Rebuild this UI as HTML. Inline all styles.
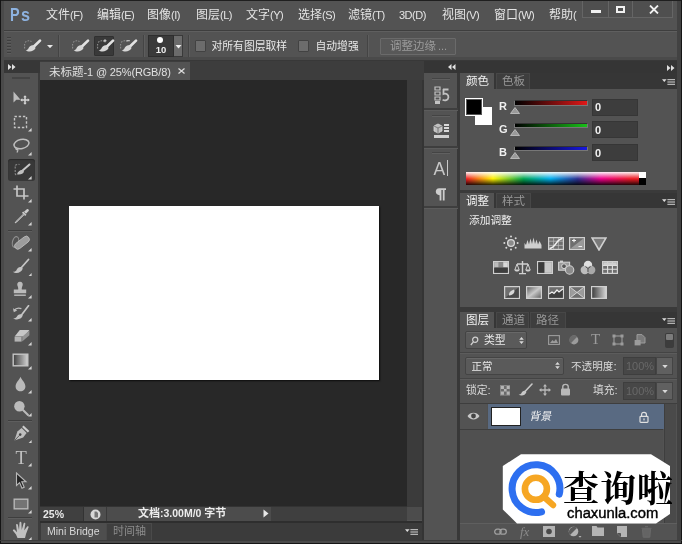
<!DOCTYPE html>
<html lang="zh"><head><meta charset="utf-8"><title>Photoshop</title>
<style>
html,body{margin:0;padding:0;}
body{width:682px;height:544px;overflow:hidden;position:relative;background:#535353;font-family:"Liberation Sans","Noto Sans CJK SC",sans-serif;}
div,svg.a{position:absolute;}
.l{white-space:nowrap;}
.cjt{display:inline-block;vertical-align:top;letter-spacing:0;white-space:nowrap;font-family:"Liberation Sans","Noto Sans CJK SC",sans-serif;}
</style></head><body><div id="root" style="left:0;top:0;width:682px;height:544px;will-change:transform;overflow:hidden;">
<div style="left:0px;top:0px;width:682px;height:544px;background:#535353;"></div>
<div style="left:0px;top:0px;width:682px;height:1px;background:#1f1f1f;"></div>
<div style="left:0px;top:30px;width:682px;height:1px;background:#3e3e3e;"></div>
<div class="l" style="left:46px;top:9px;font-size:11px;letter-spacing:-0.5px;line-height:13.92px;height:13.92px;color:#e4e4e4;"><span class="cjt" style="width:24px;font-size:12px;">文件</span>(F)</div>
<div class="l" style="left:97px;top:9px;font-size:11px;letter-spacing:-0.5px;line-height:13.92px;height:13.92px;color:#e4e4e4;"><span class="cjt" style="width:24px;font-size:12px;">编辑</span>(E)</div>
<div class="l" style="left:147px;top:9px;font-size:11px;letter-spacing:-0.5px;line-height:13.92px;height:13.92px;color:#e4e4e4;"><span class="cjt" style="width:24px;font-size:12px;">图像</span>(I)</div>
<div class="l" style="left:196px;top:9px;font-size:11px;letter-spacing:-0.5px;line-height:13.92px;height:13.92px;color:#e4e4e4;"><span class="cjt" style="width:24px;font-size:12px;">图层</span>(L)</div>
<div class="l" style="left:246px;top:9px;font-size:11px;letter-spacing:-0.5px;line-height:13.92px;height:13.92px;color:#e4e4e4;"><span class="cjt" style="width:24px;font-size:12px;">文字</span>(Y)</div>
<div class="l" style="left:298px;top:9px;font-size:11px;letter-spacing:-0.5px;line-height:13.92px;height:13.92px;color:#e4e4e4;"><span class="cjt" style="width:24px;font-size:12px;">选择</span>(S)</div>
<div class="l" style="left:348px;top:9px;font-size:11px;letter-spacing:-0.5px;line-height:13.92px;height:13.92px;color:#e4e4e4;"><span class="cjt" style="width:24px;font-size:12px;">滤镜</span>(T)</div>
<div class="l" style="left:399px;top:9px;font-size:11px;letter-spacing:-0.5px;line-height:13.92px;height:13.92px;color:#e4e4e4;">3D(D)</div>
<div class="l" style="left:442px;top:9px;font-size:11px;letter-spacing:-0.5px;line-height:13.92px;height:13.92px;color:#e4e4e4;"><span class="cjt" style="width:24px;font-size:12px;">视图</span>(V)</div>
<div class="l" style="left:494px;top:9px;font-size:11px;letter-spacing:-0.5px;line-height:13.92px;height:13.92px;color:#e4e4e4;"><span class="cjt" style="width:24px;font-size:12px;">窗口</span>(W)</div>
<div class="l" style="left:549px;top:9px;font-size:11px;letter-spacing:-0.5px;line-height:13.92px;height:13.92px;color:#e4e4e4;"><span class="cjt" style="width:24px;font-size:12px;">帮助</span>(</div>
<div class="l" style="left:10.4px;top:5.2px;font-size:18px;line-height:20px;font-weight:bold;color:#8db2e0;"><span style="display:inline-block;transform-origin:0 0;transform:scaleX(0.8);">P</span><span style="display:inline-block;margin-left:-1.1px;transform-origin:0 0;transform:scaleX(0.9);">s</span></div>
<div style="left:582px;top:1px;width:27px;height:17px;background:#4f4f4f;border:1px solid #656565;border-top:none;box-sizing:border-box;"></div>
<div style="left:608px;top:1px;width:25px;height:17px;background:#4f4f4f;border:1px solid #656565;border-top:none;box-sizing:border-box;"></div>
<div style="left:632px;top:1px;width:41px;height:17px;background:#4f4f4f;border:1px solid #656565;border-top:none;box-sizing:border-box;"></div>
<div style="left:591px;top:10px;width:10px;height:3px;background:#f0f0f0;"></div>
<div style="left:616px;top:6px;width:9px;height:7px;border:2px solid #f0f0f0;border-top-width:2px;box-sizing:border-box;"></div>
<svg class="a" style="left:649px;top:5px" width="10" height="9" viewBox="0 0 10 9"><path d="M1 0.5L9 8.5M9 0.5L1 8.5" stroke="#f0f0f0" stroke-width="1.8"/></svg>
<div style="left:4px;top:31px;width:673px;height:1px;background:#5f5f5f;"></div>
<div style="left:0px;top:57px;width:682px;height:4px;background:#4a4a4a;"></div>
<div style="left:0px;top:60px;width:682px;height:1px;background:#383838;"></div>
<div style="left:7px;top:37px;width:4px;height:18px;background:repeating-linear-gradient(#3f3f3f 0 1px,#5c5c5c 1px 2px,transparent 2px 3px);"></div>
<div style="left:58px;top:35px;width:1px;height:22px;background:#444;"></div>
<div style="left:59px;top:35px;width:1px;height:22px;background:#5d5d5d;"></div>
<div style="left:143px;top:35px;width:1px;height:22px;background:#444;"></div>
<div style="left:144px;top:35px;width:1px;height:22px;background:#5d5d5d;"></div>
<div style="left:188px;top:35px;width:1px;height:22px;background:#444;"></div>
<div style="left:189px;top:35px;width:1px;height:22px;background:#5d5d5d;"></div>
<div style="left:366.5px;top:35px;width:1px;height:22px;background:#444;"></div>
<div style="left:367.5px;top:35px;width:1px;height:22px;background:#5d5d5d;"></div>
<svg class="a" style="left:23px;top:38px" width="19" height="16" viewBox="0 0 19 16"><path d="M2.2 4.5C3.5 2.6 6.5 2.2 8.4 3.6M1.6 6V11.5" fill="none" stroke="#8e8e8e" stroke-width="1.1" stroke-dasharray="1.6 1.2"/><path d="M17 2.6L10.4 9" stroke="#e2e2e2" stroke-width="2.7" stroke-linecap="round"/><path d="M11 7.6C8.6 6.6 6.2 8.4 5.4 10.4C4.8 11.6 3.8 12.2 2.6 12.2C5.2 14.4 11 13.8 12.6 10Z" fill="#d6d6d6"/></svg>
<svg class="a" style="left:47px;top:45px" width="6" height="3.2" viewBox="0 0 6 3.2"><path d="M0 0H6L3 3.2Z" fill="#e8e8e8"/></svg>
<svg class="a" style="left:71px;top:38px" width="19" height="16" viewBox="0 0 19 16"><path d="M2.2 4.5C3.5 2.6 6.5 2.2 8.4 3.6M1.6 6V11.5" fill="none" stroke="#8e8e8e" stroke-width="1.1" stroke-dasharray="1.6 1.2"/><path d="M17 2.6L10.4 9" stroke="#e2e2e2" stroke-width="2.7" stroke-linecap="round"/><path d="M11 7.6C8.6 6.6 6.2 8.4 5.4 10.4C4.8 11.6 3.8 12.2 2.6 12.2C5.2 14.4 11 13.8 12.6 10Z" fill="#d6d6d6"/></svg>
<div style="left:94px;top:36px;width:20px;height:20px;background:#393939;border:1px solid #303030;box-sizing:border-box;border-radius:1px;"></div>
<svg class="a" style="left:96px;top:38px" width="19" height="16" viewBox="0 0 19 16"><path d="M2.2 4.5C3.5 2.6 6.5 2.2 8.4 3.6M1.6 6V11.5" fill="none" stroke="#8e8e8e" stroke-width="1.1" stroke-dasharray="1.6 1.2"/><path d="M9 1.2V4.2M7.5 2.7H10.5" stroke="#d0d0d0" stroke-width="1.1"/><path d="M17 2.6L10.4 9" stroke="#e2e2e2" stroke-width="2.7" stroke-linecap="round"/><path d="M11 7.6C8.6 6.6 6.2 8.4 5.4 10.4C4.8 11.6 3.8 12.2 2.6 12.2C5.2 14.4 11 13.8 12.6 10Z" fill="#d6d6d6"/></svg>
<svg class="a" style="left:119px;top:38px" width="19" height="16" viewBox="0 0 19 16"><path d="M2.2 4.5C3.5 2.6 6.5 2.2 8.4 3.6M1.6 6V11.5" fill="none" stroke="#8e8e8e" stroke-width="1.1" stroke-dasharray="1.6 1.2"/><path d="M7.5 2.7H10.8" stroke="#d0d0d0" stroke-width="1.1"/><path d="M17 2.6L10.4 9" stroke="#e2e2e2" stroke-width="2.7" stroke-linecap="round"/><path d="M11 7.6C8.6 6.6 6.2 8.4 5.4 10.4C4.8 11.6 3.8 12.2 2.6 12.2C5.2 14.4 11 13.8 12.6 10Z" fill="#d6d6d6"/></svg>
<div style="left:148px;top:35px;width:26px;height:22px;background:#3a3a3a;border:1px solid #2e2e2e;box-sizing:border-box;"></div>
<div style="left:174px;top:35px;width:9px;height:22px;background:#6b6b6b;border:1px solid #3a3a3a;border-left:none;box-sizing:border-box;"></div>
<div style="left:157px;top:37px;width:6px;height:6px;background:#fff;border-radius:3px;"></div>
<div class="l" style="left:148px;top:44px;width:26px;text-align:center;font-size:9.5px;font-weight:bold;line-height:12px;color:#f0f0f0;">10</div>
<svg class="a" style="left:175px;top:45px" width="7" height="4" viewBox="0 0 7 4"><path d="M0.5 0H6.5L3.5 3.5Z" fill="#f0f0f0"/></svg>
<div style="left:194.6px;top:40.4px;width:11.5px;height:11.3px;background:#6c6c6c;border:1px solid #424242;box-sizing:border-box;border-radius:1px;"></div>
<div style="left:297.6px;top:40.4px;width:11.5px;height:11.3px;background:#6c6c6c;border:1px solid #424242;box-sizing:border-box;border-radius:1px;"></div>
<div class="l" style="left:211.5px;top:40px;font-size:12px;letter-spacing:0px;line-height:13.92px;height:13.92px;color:#e8e8e8;"><span class="cjt" style="width:75.6px;font-size:10.8px;">对所有图层取样</span></div>
<div class="l" style="left:315.5px;top:40px;font-size:12px;letter-spacing:0px;line-height:13.92px;height:13.92px;color:#e8e8e8;"><span class="cjt" style="width:43.2px;font-size:10.8px;">自动增强</span></div>
<div style="left:380px;top:38px;width:76px;height:17px;background:#585858;border:1px solid #6a6a6a;box-sizing:border-box;border-radius:1px;"></div>
<div class="l" style="left:390px;top:39.8px;font-size:12px;letter-spacing:0px;line-height:13.92px;height:13.92px;color:#9a9a9a;"><span class="cjt" style="width:46px;font-size:11.5px;">调整边缘</span></div>
<div class="l" style="left:438px;top:40px;font-size:11px;line-height:13px;color:#9a9a9a;">...</div>
<div style="left:0px;top:61px;width:682px;height:19px;background:#3d3d3d;"></div>
<div style="left:40px;top:80px;width:384px;height:427px;background:#282828;"></div>
<div style="left:40px;top:62px;width:150px;height:18px;background:#535353;"></div>
<div class="l" style="left:49px;top:65.5px;font-size:11px;letter-spacing:-0.15px;line-height:13.34px;height:13.34px;color:#e0e0e0;"><span class="cjt" style="width:34.5px;font-size:11.5px;">未标题</span>-1 @ 25%(RGB/8)</div>
<svg class="a" style="left:178px;top:68px" width="7" height="6" viewBox="0 0 7 6"><path d="M0.5 0.5L6.5 5.5M6.5 0.5L0.5 5.5" stroke="#ddd" stroke-width="1.2"/></svg>
<div style="left:68.7px;top:206px;width:310.1px;height:174.4px;background:#fff;box-shadow:1px 1px 1.5px rgba(0,0,0,0.7);"></div>
<div style="left:0px;top:61px;width:40px;height:12px;background:#373737;"></div>
<svg class="a" style="left:8px;top:64px" width="8" height="6" viewBox="0 0 8 6"><path d="M0 0L3.5 3L0 6ZM4 0L7.5 3L4 6Z" fill="#e0e0e0"/></svg>
<div style="left:4px;top:73px;width:35px;height:468px;background:#535353;"></div>
<div style="left:38px;top:73px;width:2px;height:468px;background:#3c3c3c;"></div>
<div style="left:12px;top:77px;width:18px;height:2px;background:#444;"></div>
<div style="left:7.5px;top:158.5px;width:27px;height:22px;background:#383838;border-radius:3px;box-shadow:inset 0 1px 1px #2a2a2a;"></div>
<div style="left:8px;top:230px;width:24px;height:1px;background:#3e3e3e;"></div>
<div style="left:8px;top:231px;width:24px;height:1px;background:#5e5e5e;"></div>
<div style="left:8px;top:420px;width:24px;height:1px;background:#3e3e3e;"></div>
<div style="left:8px;top:421px;width:24px;height:1px;background:#5e5e5e;"></div>
<div style="left:8px;top:517px;width:24px;height:1px;background:#3e3e3e;"></div>
<div style="left:8px;top:518px;width:24px;height:1px;background:#5e5e5e;"></div>
<div style="left:0;top:0;opacity:.86;">
<svg class="a" style="left:12px;top:91px" width="20" height="15" viewBox="0 0 20 15"><path d="M1.5 0.5V11.5L4.3 8.7H8.5Z" fill="#cfcfcf"/><path d="M13 5.5V12.5M9.5 9H16.5" stroke="#e8e8e8" stroke-width="1.6"/><path d="M13 4.2L14.8 6.3H11.2ZM13 13.8L14.8 11.7H11.2ZM8.2 9L10.3 7.2V10.8ZM17.8 9L15.7 7.2V10.8Z" fill="#e8e8e8"/></svg>
<svg class="a" style="left:13px;top:115px" width="16" height="15" viewBox="0 0 16 15"><rect x="1.5" y="1.5" width="12" height="11" fill="none" stroke="#d8d8d8" stroke-width="1.4" stroke-dasharray="2.4 1.8"/></svg>
<svg class="a" style="left:28.3px;top:128.3px" width="3.6" height="3.6" viewBox="0 0 3.6 3.6"><path d="M3.6 0V3.6H0Z" fill="#e8e8e8"/></svg>
<svg class="a" style="left:12px;top:137px" width="20" height="17" viewBox="0 0 20 17"><ellipse cx="9.5" cy="7" rx="7.6" ry="4.6" transform="rotate(-12 9.5 7)" fill="none" stroke="#d0d0d0" stroke-width="1.5"/><path d="M4.2 10.5C3.2 12 4.5 13 5.6 12.2C6.2 13.5 5.6 14.8 4.8 15.4" fill="none" stroke="#d0d0d0" stroke-width="1.2"/></svg>
<svg class="a" style="left:28.3px;top:152.3px" width="3.6" height="3.6" viewBox="0 0 3.6 3.6"><path d="M3.6 0V3.6H0Z" fill="#e8e8e8"/></svg>
<svg class="a" style="left:13px;top:162px" width="20" height="16" viewBox="0 0 20 16"><path d="M2.5 3.5C2 3 5 2 6.5 2.5M2.2 4.5V11.5C2.2 12.5 3 13 4 13" fill="none" stroke="#9a9a9a" stroke-width="1.1" stroke-dasharray="2 1.4"/><path d="M16.5 2.5L9 9" stroke="#e0e0e0" stroke-width="2" stroke-linecap="round"/><path d="M9.8 8.2C7.5 7.6 4.8 9.6 4 12.2C7 13 10.6 11.6 11 9.4Z" fill="#d6d6d6"/></svg>
<svg class="a" style="left:28.3px;top:176.3px" width="3.6" height="3.6" viewBox="0 0 3.6 3.6"><path d="M3.6 0V3.6H0Z" fill="#e8e8e8"/></svg>
<svg class="a" style="left:13px;top:185px" width="16" height="16" viewBox="0 0 16 16"><path d="M4 0.5V11H15.5M0.5 4H11V14.5" fill="none" stroke="#d8d8d8" stroke-width="1.7"/></svg>
<svg class="a" style="left:28.3px;top:199.3px" width="3.6" height="3.6" viewBox="0 0 3.6 3.6"><path d="M3.6 0V3.6H0Z" fill="#e8e8e8"/></svg>
<svg class="a" style="left:13px;top:208px" width="17" height="17" viewBox="0 0 17 17"><path d="M13.8 1.2C15 0.4 16.4 1.8 15.7 3L13 5.8L11 3.8Z" fill="#e0e0e0"/><path d="M9.6 4.2L12.8 7.4" stroke="#e0e0e0" stroke-width="1.8"/><path d="M11 5.5L3.5 13L2 15L4 13.7L11.6 6.2Z" fill="#8a8a8a" stroke="#d8d8d8" stroke-width="1"/></svg>
<svg class="a" style="left:28.3px;top:222.3px" width="3.6" height="3.6" viewBox="0 0 3.6 3.6"><path d="M3.6 0V3.6H0Z" fill="#e8e8e8"/></svg>
<svg class="a" style="left:11px;top:234px" width="21" height="18" viewBox="0 0 21 18"><ellipse cx="4.5" cy="8" rx="3" ry="5.5" transform="rotate(15 4.5 8)" fill="none" stroke="#9c9c9c" stroke-width="1.1"/><rect x="2.5" y="5.5" width="17" height="6.4" rx="3.2" transform="rotate(-38 11 8.7)" fill="#a8a8a8" stroke="#d0d0d0" stroke-width="0.8"/></svg>
<svg class="a" style="left:28.3px;top:248.3px" width="3.6" height="3.6" viewBox="0 0 3.6 3.6"><path d="M3.6 0V3.6H0Z" fill="#e8e8e8"/></svg>
<svg class="a" style="left:12px;top:258px" width="19" height="17" viewBox="0 0 19 17"><path d="M16.5 1.5L9 10" stroke="#d8d8d8" stroke-width="1.8" stroke-linecap="round"/><path d="M9.3 9.2C7 8.6 5 10.5 4.3 12.5C3.5 13.6 2 14 0.8 13.8C3.5 16 9.4 15.4 10.8 10.6Z" fill="#d6d6d6"/></svg>
<svg class="a" style="left:28.3px;top:272.8px" width="3.6" height="3.6" viewBox="0 0 3.6 3.6"><path d="M3.6 0V3.6H0Z" fill="#e8e8e8"/></svg>
<svg class="a" style="left:12px;top:281px" width="17" height="18" viewBox="0 0 17 18"><path d="M8 0.8C10.2 0.8 11.2 2.6 10.6 4.4C10 6 9.6 7 9.8 8.4H14.2V12.2H1.8V8.4H6.2C6.4 7 6 6 5.4 4.4C4.8 2.6 5.8 0.8 8 0.8Z" fill="#cdcdcd"/><path d="M2.2 14.2H13.8" stroke="#cdcdcd" stroke-width="1.4"/></svg>
<svg class="a" style="left:28.3px;top:295.3px" width="3.6" height="3.6" viewBox="0 0 3.6 3.6"><path d="M3.6 0V3.6H0Z" fill="#e8e8e8"/></svg>
<svg class="a" style="left:12px;top:305px" width="19" height="17" viewBox="0 0 19 17"><path d="M16.5 0.8L9.5 10" stroke="#d8d8d8" stroke-width="1.7" stroke-linecap="round"/><path d="M9.3 9.4C7.2 8.8 5.4 10.4 4.6 12C3.8 13 2.4 13.4 1.2 13.2C3.8 15.4 9.4 14.8 10.8 10.6Z" fill="#d6d6d6"/><path d="M2 5.6C3.6 3.4 6.6 2.6 9.4 3.6" fill="none" stroke="#cfcfcf" stroke-width="1.3"/><path d="M1 3.2L1.8 7.2L5.2 5.4Z" fill="#cfcfcf"/></svg>
<svg class="a" style="left:28.3px;top:318.3px" width="3.6" height="3.6" viewBox="0 0 3.6 3.6"><path d="M3.6 0V3.6H0Z" fill="#e8e8e8"/></svg>
<svg class="a" style="left:13px;top:329px" width="18" height="15" viewBox="0 0 18 15"><path d="M6.8 1H16.4L11.4 7.4H1.6Z" fill="#dadada"/><path d="M1.6 7.8H8.6V12.6H1.6Z" fill="#c4c4c4"/><path d="M9.2 7.8L16.4 1.6V6.2L9.2 12.6Z" fill="#9e9e9e"/></svg>
<svg class="a" style="left:28.3px;top:342.3px" width="3.6" height="3.6" viewBox="0 0 3.6 3.6"><path d="M3.6 0V3.6H0Z" fill="#e8e8e8"/></svg>
<svg class="a" style="left:12px;top:353px" width="18" height="15" viewBox="0 0 18 15"><defs><linearGradient id="gg" x1="0" x2="1"><stop offset="0" stop-color="#3c3c3c"/><stop offset="1" stop-color="#e8e8e8"/></linearGradient></defs><rect x="1.2" y="1.2" width="14.6" height="11.6" fill="url(#gg)" stroke="#d8d8d8" stroke-width="1.4"/></svg>
<svg class="a" style="left:28.3px;top:366.3px" width="3.6" height="3.6" viewBox="0 0 3.6 3.6"><path d="M3.6 0V3.6H0Z" fill="#e8e8e8"/></svg>
<svg class="a" style="left:14px;top:376px" width="14" height="17" viewBox="0 0 14 17"><path d="M6.5 0.8C7.6 3.8 11.4 6.8 11.4 10.4C11.4 13.4 9.2 15.2 6.5 15.2C3.8 15.2 1.6 13.4 1.6 10.4C1.6 6.8 5.4 3.8 6.5 0.8Z" fill="#cbcbcb"/></svg>
<svg class="a" style="left:28.3px;top:390.3px" width="3.6" height="3.6" viewBox="0 0 3.6 3.6"><path d="M3.6 0V3.6H0Z" fill="#e8e8e8"/></svg>
<svg class="a" style="left:13px;top:400px" width="18" height="17" viewBox="0 0 18 17"><circle cx="6.4" cy="6.2" r="5.2" fill="#cdcdcd"/><path d="M10 10L15 15" stroke="#cdcdcd" stroke-width="2" stroke-linecap="round"/></svg>
<svg class="a" style="left:28.3px;top:413.3px" width="3.6" height="3.6" viewBox="0 0 3.6 3.6"><path d="M3.6 0V3.6H0Z" fill="#e8e8e8"/></svg>
<svg class="a" style="left:13px;top:425px" width="18" height="18" viewBox="0 0 18 18"><path d="M9.8 1.2L15.6 6.8" stroke="#e0e0e0" stroke-width="2.2"/><path d="M8.6 3L13.6 8L10.2 12.4L1.4 15.6L4.4 6.6Z" fill="#d0d0d0"/><circle cx="7.2" cy="9.6" r="1.3" fill="#444"/><path d="M1.6 15.4L6.6 10.2" stroke="#555" stroke-width="0.9"/></svg>
<svg class="a" style="left:28.3px;top:439.8px" width="3.6" height="3.6" viewBox="0 0 3.6 3.6"><path d="M3.6 0V3.6H0Z" fill="#e8e8e8"/></svg>
<div class="l" style="left:15.5px;top:447.5px;font-family:'Liberation Serif',serif;font-size:18.5px;line-height:20px;color:#d2d2d2;">T</div>
<svg class="a" style="left:28.3px;top:463.3px" width="3.6" height="3.6" viewBox="0 0 3.6 3.6"><path d="M3.6 0V3.6H0Z" fill="#e8e8e8"/></svg>
<svg class="a" style="left:15px;top:472px" width="13" height="18" viewBox="0 0 13 18"><path d="M1.5 1V13.5L4.6 10.6L7 16.2L9.2 15.2L6.8 9.8H11Z" fill="#1e1e1e" stroke="#c8c8c8" stroke-width="1.1"/></svg>
<svg class="a" style="left:28.3px;top:486.3px" width="3.6" height="3.6" viewBox="0 0 3.6 3.6"><path d="M3.6 0V3.6H0Z" fill="#e8e8e8"/></svg>
<svg class="a" style="left:13px;top:498px" width="17" height="13" viewBox="0 0 17 13"><rect x="1.2" y="1.2" width="13.6" height="9.6" fill="#7a7a7a" stroke="#c8c8c8" stroke-width="1.4"/></svg>
<svg class="a" style="left:28.3px;top:510.3px" width="3.6" height="3.6" viewBox="0 0 3.6 3.6"><path d="M3.6 0V3.6H0Z" fill="#e8e8e8"/></svg>
<svg class="a" style="left:12px;top:521px" width="18" height="18" viewBox="0 0 18 18"><path d="M5.5 17L4 13.5L1 9.8C0.4 8.8 1.8 7.8 2.8 8.8L5 11.2L4.1 4C4 2.8 5.6 2.6 5.9 3.8L7 9L7.5 1.7C7.6 0.5 9.3 0.5 9.4 1.7L9.7 9L11.6 2.6C11.9 1.4 13.5 1.7 13.3 2.9L12.2 9.6L15 5.8C15.6 4.8 17 5.4 16.5 6.5L14 13L13 17Z" fill="#d4d4d4"/></svg>
<svg class="a" style="left:28.3px;top:537.3px" width="3.6" height="3.6" viewBox="0 0 3.6 3.6"><path d="M3.6 0V3.6H0Z" fill="#e8e8e8"/></svg>
</div>
<div style="left:40px;top:506px;width:384px;height:1px;background:#333;"></div>
<div style="left:40px;top:507px;width:43px;height:14px;background:#404040;"></div>
<div style="left:83px;top:507px;width:1px;height:14px;background:#333;"></div>
<div style="left:84px;top:507px;width:22px;height:14px;background:#4e4e4e;"></div>
<div style="left:106px;top:507px;width:1px;height:14px;background:#3a3a3a;"></div>
<div style="left:107px;top:507px;width:164px;height:14px;background:#4c4c4c;"></div>
<div style="left:271px;top:507px;width:135.5px;height:14px;background:#3f3f3f;"></div>
<div style="left:406.5px;top:506px;width:15px;height:14px;background:#4c4c4c;"></div>
<div style="left:406.5px;top:80px;width:15px;height:427px;background:#3b3b3b;"></div>
<div style="left:421.5px;top:80px;width:2.5px;height:460px;background:#343434;"></div>
<div class="l" style="left:43px;top:507px;font-size:10.5px;font-weight:bold;line-height:14px;color:#e8e8e8;">25%</div>
<svg class="a" style="left:90px;top:509px" width="11" height="11" viewBox="0 0 11 11"><circle cx="5.5" cy="5.5" r="5" fill="#d8d8d8"/><path d="M4.5 2.5H6.5L8 4V8.5H4.5Z" fill="#777"/></svg>
<div class="l" style="left:138px;top:507px;font-size:10.5px;letter-spacing:0px;line-height:12.76px;height:12.76px;color:#ececec;font-weight:bold;"><span class="cjt" style="width:22px;font-size:11px;">文档</span>:3.00M/0 <span class="cjt" style="width:22px;font-size:11px;">字节</span></div>
<svg class="a" style="left:263px;top:509px" width="6" height="9" viewBox="0 0 6 9"><path d="M0.5 0.5L5.5 4.5L0.5 8.5Z" fill="#e8e8e8"/></svg>
<div style="left:40px;top:521px;width:382px;height:2px;background:#2e2e2e;"></div>
<div style="left:40px;top:523px;width:382px;height:17px;background:#3b3b3b;"></div>
<div style="left:40.5px;top:523px;width:65px;height:17px;background:#4e4e4e;"></div>
<div style="left:106px;top:523px;width:46px;height:17px;background:#3f3f3f;border:1px solid #4a4a4a;border-bottom:none;box-sizing:border-box;"></div>
<div class="l" style="left:47px;top:524px;font-size:10.5px;line-height:15px;color:#d8d8d8;">Mini Bridge</div>
<div class="l" style="left:113px;top:525px;font-size:11px;letter-spacing:0px;line-height:12.76px;height:12.76px;color:#8c8c8c;"><span class="cjt" style="width:33px;font-size:11px;">时间轴</span></div>
<svg class="a" style="left:405px;top:528.5px" width="13" height="6" viewBox="0 0 13 6"><path d="M0 0.3H4.6L2.3 3Z" fill="#ddd"/><path d="M5.4 0.7H13M5.4 3H13M5.4 5.3H13" stroke="#d4d4d4" stroke-width="1"/></svg>
<div style="left:424px;top:61px;width:258px;height:12px;background:#353535;"></div>
<svg class="a" style="left:448px;top:64px" width="8" height="6" viewBox="0 0 8 6"><path d="M3.5 0L0 3L3.5 6ZM7.5 0L4 3L7.5 6Z" fill="#e0e0e0"/></svg>
<svg class="a" style="left:667px;top:64.5px" width="8" height="6" viewBox="0 0 8 6"><path d="M0 0L3.5 3L0 6ZM4 0L7.5 3L4 6Z" fill="#e0e0e0"/></svg>
<div style="left:424px;top:73px;width:33.4px;height:467px;background:#535353;"></div>
<div style="left:457.4px;top:73px;width:2.6px;height:467px;background:#383838;"></div>
<div style="left:432px;top:78px;width:18px;height:1px;background:#444;"></div>
<div style="left:432px;top:79px;width:18px;height:1px;background:#606060;"></div>
<svg class="a" style="left:434px;top:85px" width="17" height="20" viewBox="0 0 17 20"><path d="M1 2H6V5H1ZM1 7H6V10H1ZM1 12H6V15H1Z" fill="none" stroke="#c2c2c2" stroke-width="1.2"/><rect x="1" y="16" width="5" height="3" fill="#c2c2c2"/><path d="M9 4.5H14.5M9.5 4V9C12 8 14.8 9.5 14.4 12.5C14 15.5 11 16 8.6 14.8" fill="none" stroke="#c2c2c2" stroke-width="1.8"/></svg>
<div style="left:424px;top:108px;width:34px;height:2px;background:#3e3e3e;"></div>
<div style="left:424px;top:110px;width:34px;height:1px;background:#5c5c5c;"></div>
<div style="left:432px;top:115px;width:18px;height:1px;background:#444;"></div>
<div style="left:432px;top:116px;width:18px;height:1px;background:#606060;"></div>
<svg class="a" style="left:433px;top:122.5px" width="18" height="16" viewBox="0 0 18 16"><path d="M5 1L9 3V8L5 10L1 8V3Z" fill="#bdbdbd" stroke="#d8d8d8" stroke-width="0.8"/><path d="M1 3L5 5L9 3M5 5V10" stroke="#666" stroke-width="0.8" fill="none"/><path d="M11 2H16M11 5H16M11 8H16" stroke="#d8d8d8" stroke-width="1.8"/><rect x="1" y="12" width="15" height="3" fill="#d0d0d0"/></svg>
<div style="left:424px;top:146px;width:34px;height:2px;background:#3e3e3e;"></div>
<div style="left:424px;top:148px;width:34px;height:1px;background:#5c5c5c;"></div>
<div style="left:432px;top:152px;width:18px;height:1px;background:#444;"></div>
<div style="left:432px;top:153px;width:18px;height:1px;background:#606060;"></div>
<div class="l" style="left:433.5px;top:158.5px;font-size:17.5px;line-height:20px;color:#c8c8c8;">A</div>
<div style="left:447px;top:160px;width:1.3px;height:16px;background:#c8c8c8;"></div>
<div style="left:424px;top:206px;width:34px;height:2px;background:#3e3e3e;"></div>
<div style="left:424px;top:208px;width:34px;height:1px;background:#5c5c5c;"></div>
<svg class="a" style="left:434px;top:188px" width="13" height="13" viewBox="0 0 13 13"><path d="M5.2 0.3H12V2H10.6V12.4H8.8V2H7.4V12.4H5.6V7.2C0.6 7.2 0.6 0.3 5.2 0.3Z" fill="#cdcdcd"/></svg>
<div style="left:460px;top:73px;width:217px;height:16px;background:#363636;"></div>
<div style="left:460px;top:73px;width:34px;height:17px;background:#535353;"></div>
<div class="l" style="left:466px;top:74.5px;font-size:11.5px;letter-spacing:0px;line-height:13.34px;height:13.34px;color:#f0f0f0;"><span class="cjt" style="width:23px;font-size:11.5px;">颜色</span></div>
<div style="left:496px;top:73px;width:34px;height:16px;background:#3e3e3e;border:1px solid #474747;border-bottom:none;box-sizing:border-box;"></div>
<div class="l" style="left:502px;top:74.5px;font-size:11.5px;letter-spacing:0px;line-height:13.34px;height:13.34px;color:#989898;"><span class="cjt" style="width:23px;font-size:11.5px;">色板</span></div>
<svg class="a" style="left:661.5px;top:78.5px" width="13" height="6" viewBox="0 0 13 6"><path d="M0 0.3H4.6L2.3 3Z" fill="#ddd"/><path d="M5.4 0.7H13M5.4 3H13M5.4 5.3H13" stroke="#d4d4d4" stroke-width="1"/></svg>
<div style="left:460px;top:89px;width:217px;height:101px;background:#535353;"></div>
<div style="left:475px;top:107px;width:17px;height:18px;background:#fff;"></div>
<div style="left:465px;top:98px;width:18px;height:18px;background:#000;border:1px solid #fff;box-shadow:inset 0 0 0 1px #555;box-sizing:border-box;"></div>
<div class="l" style="left:499px;top:99.1px;font-size:11px;line-height:14px;color:#f0f0f0;font-weight:bold;">R</div>
<div style="left:513.5px;top:100.39999999999999px;width:74px;height:5.4px;background:linear-gradient(90deg,#000,#e01818);border:1px solid #777;border-top-color:#333;box-sizing:border-box;"></div>
<svg class="a" style="left:509.5px;top:106.6px" width="10" height="7" viewBox="0 0 10 7"><path d="M5 0.5L9.5 6.5H0.5Z" fill="#9a9a9a" stroke="#c8c8c8" stroke-width="0.8"/></svg>
<div style="left:591.5px;top:98.6px;width:46px;height:17px;background:#3d3d3d;border:1px solid #363636;box-sizing:border-box;"></div>
<div class="l" style="left:595px;top:100.1px;font-size:11px;font-weight:bold;line-height:14px;color:#f0f0f0;">0</div>
<div class="l" style="left:499px;top:121.8px;font-size:11px;line-height:14px;color:#f0f0f0;font-weight:bold;">G</div>
<div style="left:513.5px;top:123.1px;width:74px;height:5.4px;background:linear-gradient(90deg,#000,#18c018);border:1px solid #777;border-top-color:#333;box-sizing:border-box;"></div>
<svg class="a" style="left:509.5px;top:129.3px" width="10" height="7" viewBox="0 0 10 7"><path d="M5 0.5L9.5 6.5H0.5Z" fill="#9a9a9a" stroke="#c8c8c8" stroke-width="0.8"/></svg>
<div style="left:591.5px;top:121.3px;width:46px;height:17px;background:#3d3d3d;border:1px solid #363636;box-sizing:border-box;"></div>
<div class="l" style="left:595px;top:122.8px;font-size:11px;font-weight:bold;line-height:14px;color:#f0f0f0;">0</div>
<div class="l" style="left:499px;top:144.5px;font-size:11px;line-height:14px;color:#f0f0f0;font-weight:bold;">B</div>
<div style="left:513.5px;top:145.8px;width:74px;height:5.4px;background:linear-gradient(90deg,#000,#1818e0);border:1px solid #777;border-top-color:#333;box-sizing:border-box;"></div>
<svg class="a" style="left:509.5px;top:152.0px" width="10" height="7" viewBox="0 0 10 7"><path d="M5 0.5L9.5 6.5H0.5Z" fill="#9a9a9a" stroke="#c8c8c8" stroke-width="0.8"/></svg>
<div style="left:591.5px;top:144.0px;width:46px;height:17px;background:#3d3d3d;border:1px solid #363636;box-sizing:border-box;"></div>
<div class="l" style="left:595px;top:145.5px;font-size:11px;font-weight:bold;line-height:14px;color:#f0f0f0;">0</div>
<div style="left:466px;top:171.5px;width:180px;height:13.5px;background:linear-gradient(180deg,rgba(255,255,255,.95),rgba(255,255,255,0) 52%,rgba(0,0,0,0) 52%,rgba(0,0,0,.85)),linear-gradient(90deg,#ed1c24 0%,#fff200 15%,#00a651 32%,#00aeef 47%,#2e3192 62%,#ec008c 75%,#ed1c24 92%);"></div>
<div style="left:638.5px;top:171.5px;width:7.5px;height:6.7px;background:#fff;"></div>
<div style="left:638.5px;top:178.2px;width:7.5px;height:6.8px;background:#000;"></div>
<div style="left:460px;top:190px;width:217px;height:3px;background:#3a3a3a;"></div>
<div style="left:460px;top:193px;width:217px;height:15px;background:#363636;"></div>
<div style="left:460px;top:193px;width:34px;height:16px;background:#535353;"></div>
<div class="l" style="left:466px;top:194.5px;font-size:11.5px;letter-spacing:0px;line-height:13.34px;height:13.34px;color:#f0f0f0;"><span class="cjt" style="width:23px;font-size:11.5px;">调整</span></div>
<div style="left:496px;top:193px;width:35px;height:15px;background:#3e3e3e;border:1px solid #474747;border-bottom:none;box-sizing:border-box;"></div>
<div class="l" style="left:502px;top:194.5px;font-size:11.5px;letter-spacing:0px;line-height:13.34px;height:13.34px;color:#989898;"><span class="cjt" style="width:23px;font-size:11.5px;">样式</span></div>
<svg class="a" style="left:661.5px;top:198.5px" width="13" height="6" viewBox="0 0 13 6"><path d="M0 0.3H4.6L2.3 3Z" fill="#ddd"/><path d="M5.4 0.7H13M5.4 3H13M5.4 5.3H13" stroke="#d4d4d4" stroke-width="1"/></svg>
<div style="left:460px;top:208px;width:217px;height:99px;background:#535353;"></div>
<div class="l" style="left:469px;top:214px;font-size:11.5px;letter-spacing:0px;line-height:13.34px;height:13.34px;color:#f0f0f0;"><span class="cjt" style="width:42.8px;font-size:10.7px;">添加调整</span></div>
<svg class="a" style="left:503px;top:235px" width="16" height="16" viewBox="0 0 16 16"><circle cx="8" cy="8" r="3.4" fill="#8a8a8a" stroke="#d8d8d8" stroke-width="1.3"/><circle cx="14.60" cy="8.00" r="1" fill="#d8d8d8"/><circle cx="12.67" cy="12.67" r="1" fill="#d8d8d8"/><circle cx="8.00" cy="14.60" r="1" fill="#d8d8d8"/><circle cx="3.33" cy="12.67" r="1" fill="#d8d8d8"/><circle cx="1.40" cy="8.00" r="1" fill="#d8d8d8"/><circle cx="3.33" cy="3.33" r="1" fill="#d8d8d8"/><circle cx="8.00" cy="1.40" r="1" fill="#d8d8d8"/><circle cx="12.67" cy="3.33" r="1" fill="#d8d8d8"/></svg>
<svg class="a" style="left:524px;top:237px" width="18" height="12" viewBox="0 0 18 12"><path d="M0.5 11.5V6L2 8L3.5 3L5 7.5L6.5 1.5L8 7L9.5 0.5L11 7L12.5 2.5L14 7.5L15.5 4L17.5 8V11.5Z" fill="#cfcfcf"/></svg>
<svg class="a" style="left:548px;top:237px" width="16" height="13" viewBox="0 0 16 13"><rect x="0.6" y="0.6" width="14.8" height="11.8" fill="#6e6e6e" stroke="#d0d0d0" stroke-width="1.2"/><path d="M1 4.2H15M1 8.4H15M5.6 1V12M10.4 1V12" stroke="#bdbdbd" stroke-width="0.7"/><path d="M1.5 11.5C8 11 8 2 14.5 1.5" fill="none" stroke="#f0f0f0" stroke-width="1.4"/></svg>
<svg class="a" style="left:569px;top:237px" width="16" height="13" viewBox="0 0 16 13"><rect x="0.6" y="0.6" width="14.8" height="11.8" fill="#6e6e6e" stroke="#d0d0d0" stroke-width="1.2"/><path d="M1.2 11.8L14.8 1.2V11.8Z" fill="#9a9a9a"/><path d="M3 3.5H7M5 1.8V5.2M9.5 9.5H13" stroke="#f0f0f0" stroke-width="1.2"/></svg>
<svg class="a" style="left:591px;top:237px" width="16" height="14" viewBox="0 0 16 14"><path d="M1 1H15L8 13Z" fill="#7a7a7a" stroke="#d0d0d0" stroke-width="1.6"/></svg>
<svg class="a" style="left:493px;top:261px" width="16" height="13" viewBox="0 0 16 13"><rect x="0.6" y="0.6" width="14.8" height="11.8" fill="#6e6e6e" stroke="#d0d0d0" stroke-width="1.2"/><rect x="1.2" y="1.2" width="4.5" height="5" fill="#bcbcbc"/><rect x="5.7" y="1.2" width="4.5" height="5" fill="#8a8a8a"/><rect x="10.2" y="1.2" width="4.6" height="5" fill="#d8d8d8"/><rect x="1.2" y="6.8" width="13.6" height="5" fill="#3e3e3e"/></svg>
<svg class="a" style="left:514px;top:260px" width="17" height="15" viewBox="0 0 17 15"><path d="M8.5 1V13M3 4H14M5 13.6H12" stroke="#d0d0d0" stroke-width="1.4" fill="none"/><path d="M3 4L0.8 10H5.2ZM14 4L11.8 10H16.2Z" fill="none" stroke="#d0d0d0" stroke-width="1"/><path d="M0.6 10H5.4C5 12 1 12 0.6 10ZM11.6 10H16.4C16 12 12 12 11.6 10Z" fill="#d0d0d0"/></svg>
<svg class="a" style="left:537px;top:261px" width="16" height="13" viewBox="0 0 16 13"><rect x="0.6" y="0.6" width="14.8" height="11.8" fill="#6e6e6e" stroke="#d0d0d0" stroke-width="1.2"/><rect x="1.2" y="1.2" width="6.2" height="10.6" fill="#3c3c3c"/><rect x="7.6" y="1.2" width="7.2" height="10.6" fill="#c8c8c8"/></svg>
<svg class="a" style="left:558px;top:260px" width="17" height="15" viewBox="0 0 17 15"><rect x="0.6" y="2.2" width="11" height="8" fill="#9a9a9a" stroke="#d0d0d0" stroke-width="1.1"/><rect x="2" y="0.6" width="3" height="2" fill="#d0d0d0"/><circle cx="6" cy="6.2" r="2.4" fill="#555" stroke="#d8d8d8" stroke-width="1"/><circle cx="11.6" cy="10" r="4.2" fill="#8c8c8c" stroke="#d0d0d0" stroke-width="1.1"/></svg>
<svg class="a" style="left:580px;top:260px" width="16" height="15" viewBox="0 0 16 15"><circle cx="8" cy="5" r="4.2" fill="#e0e0e0"/><circle cx="4.8" cy="10" r="4.2" fill="#bdbdbd"/><circle cx="11.2" cy="10" r="4.2" fill="#a8a8a8"/><path d="M8 8.5V12M8 8.5L5.4 6.6M8 8.5L10.6 6.6" stroke="#4a4a4a" stroke-width="0.9"/></svg>
<svg class="a" style="left:602px;top:261px" width="16" height="13" viewBox="0 0 16 13"><rect x="0.6" y="0.6" width="14.8" height="11.8" fill="#6e6e6e" stroke="#d0d0d0" stroke-width="1.2"/><path d="M1 4.4H15M1 8.2H15M5.6 1V12M10.4 1V12" stroke="#e0e0e0" stroke-width="1.1"/><rect x="1.2" y="1.2" width="13.6" height="3" fill="#cfcfcf"/></svg>
<svg class="a" style="left:504px;top:286px" width="16" height="13" viewBox="0 0 16 13"><rect x="0.6" y="0.6" width="14.8" height="11.8" fill="#6e6e6e" stroke="#d0d0d0" stroke-width="1.2"/><path d="M1.2 11.8L14.8 1.2V11.8Z" fill="#4a4a4a"/><path d="M5 9.5C4.5 6.5 7 4.5 10 3.5C11.5 5.8 9.5 9 5 9.5Z" fill="#d8d8d8"/></svg>
<svg class="a" style="left:526px;top:286px" width="16" height="13" viewBox="0 0 16 13"><defs><linearGradient id="g2" x1="0" y1="0" x2="1" y2="1"><stop offset="0" stop-color="#5a5a5a"/><stop offset=".5" stop-color="#c8c8c8"/><stop offset="1" stop-color="#5a5a5a"/></linearGradient></defs><rect x="0.6" y="0.6" width="14.8" height="11.8" fill="url(#g2)" stroke="#d0d0d0" stroke-width="1.2"/></svg>
<svg class="a" style="left:548px;top:286px" width="16" height="13" viewBox="0 0 16 13"><rect x="0.6" y="0.6" width="14.8" height="11.8" fill="#6e6e6e" stroke="#d0d0d0" stroke-width="1.2"/><path d="M1.2 8L4 6L6 7.5L9 4L11 6L14.8 3V11.8H1.2Z" fill="#3e3e3e"/><path d="M1.2 8L4 6L6 7.5L9 4L11 6L14.8 3" stroke="#f0f0f0" stroke-width="1.2" fill="none"/></svg>
<svg class="a" style="left:569px;top:286px" width="16" height="13" viewBox="0 0 16 13"><rect x="0.6" y="0.6" width="14.8" height="11.8" fill="#6e6e6e" stroke="#d0d0d0" stroke-width="1.2"/><path d="M1.2 1.2L8 6.5L1.2 11.8ZM14.8 1.2L8 6.5L14.8 11.8Z" fill="#9c9c9c"/><path d="M1.2 1.2L14.8 11.8M14.8 1.2L1.2 11.8" stroke="#d8d8d8" stroke-width="0.9"/></svg>
<svg class="a" style="left:591px;top:286px" width="16" height="13" viewBox="0 0 16 13"><defs><linearGradient id="g3" x1="0" x2="1"><stop offset="0" stop-color="#3a3a3a"/><stop offset="1" stop-color="#d8d8d8"/></linearGradient></defs><rect x="0.6" y="0.6" width="14.8" height="11.8" fill="url(#g3)" stroke="#d0d0d0" stroke-width="1.2"/></svg>
<div style="left:460px;top:307px;width:217px;height:5px;background:#3a3a3a;"></div>
<div style="left:460px;top:312px;width:217px;height:16px;background:#363636;"></div>
<div style="left:460px;top:312px;width:34px;height:17px;background:#535353;"></div>
<div class="l" style="left:466px;top:313.5px;font-size:11.5px;letter-spacing:0px;line-height:13.34px;height:13.34px;color:#f0f0f0;"><span class="cjt" style="width:23px;font-size:11.5px;">图层</span></div>
<div style="left:496px;top:312px;width:33px;height:16px;background:#3e3e3e;border:1px solid #474747;border-bottom:none;box-sizing:border-box;"></div>
<div class="l" style="left:502px;top:313.5px;font-size:11.5px;letter-spacing:0px;line-height:13.34px;height:13.34px;color:#989898;"><span class="cjt" style="width:23px;font-size:11.5px;">通道</span></div>
<div style="left:530px;top:312px;width:36px;height:16px;background:#3e3e3e;border:1px solid #474747;border-bottom:none;box-sizing:border-box;"></div>
<div class="l" style="left:536px;top:313.5px;font-size:11.5px;letter-spacing:0px;line-height:13.34px;height:13.34px;color:#989898;"><span class="cjt" style="width:23px;font-size:11.5px;">路径</span></div>
<svg class="a" style="left:661.5px;top:317.5px" width="13" height="6" viewBox="0 0 13 6"><path d="M0 0.3H4.6L2.3 3Z" fill="#ddd"/><path d="M5.4 0.7H13M5.4 3H13M5.4 5.3H13" stroke="#d4d4d4" stroke-width="1"/></svg>
<div style="left:460px;top:328px;width:217px;height:212px;background:#535353;"></div>
<div style="left:465px;top:331px;width:62px;height:18px;background:#5a5a5a;border:1px solid #444;box-sizing:border-box;border-radius:2px;box-shadow:inset 0 1px 0 #686868;"></div>
<svg class="a" style="left:470px;top:335.5px" width="9" height="10" viewBox="0 0 9 10"><circle cx="5.2" cy="3.8" r="2.6" fill="none" stroke="#d0d0d0" stroke-width="1.2"/><path d="M3.4 5.8L0.8 9" stroke="#d0d0d0" stroke-width="1.3"/></svg>
<div class="l" style="left:484px;top:334.2px;font-size:11.5px;letter-spacing:0px;line-height:13.34px;height:13.34px;color:#e8e8e8;"><span class="cjt" style="width:21.6px;font-size:10.8px;">类型</span></div>
<svg class="a" style="left:519px;top:337.3px" width="5" height="7" viewBox="0 0 5 7"><path d="M2.5 0L4.8 2.8H0.2ZM2.5 7L4.8 4.2H0.2Z" fill="#d8d8d8"/></svg>
<svg class="a" style="left:548px;top:335px" width="12" height="10" viewBox="0 0 12 10"><rect x="0.6" y="0.6" width="10.8" height="8.8" fill="none" stroke="#9c9c9c" stroke-width="1.1"/><path d="M2 8L4.5 5L6 6.5L8 4L10 8Z" fill="#9c9c9c"/></svg>
<svg class="a" style="left:569px;top:335px" width="10" height="10" viewBox="0 0 10 10"><circle cx="5" cy="5" r="4.4" fill="#9c9c9c"/><path d="M1.6 8.4L8.4 1.6A4.6 4.6 0 0 0 1.6 8.4Z" fill="#6a6a6a"/></svg>
<div class="l" style="left:591px;top:331px;font-family:'Liberation Serif',serif;font-size:15px;line-height:17px;color:#9c9c9c;">T</div>
<svg class="a" style="left:612px;top:334px" width="12" height="12" viewBox="0 0 12 12"><rect x="2" y="2" width="8" height="8" fill="none" stroke="#9c9c9c" stroke-width="1.1"/><path d="M0.5 0.5H3.5V3.5H0.5ZM8.5 0.5H11.5V3.5H8.5ZM0.5 8.5H3.5V11.5H0.5ZM8.5 8.5H11.5V11.5H8.5Z" fill="#9c9c9c"/></svg>
<svg class="a" style="left:634px;top:334px" width="12" height="12" viewBox="0 0 12 12"><path d="M3 0.6H8L11 3.6V9H3Z" fill="#7a7a7a" stroke="#9c9c9c" stroke-width="1"/><rect x="0.6" y="6" width="6" height="5.4" fill="#9c9c9c"/></svg>
<div style="left:665px;top:332.5px;width:8.5px;height:15.5px;background:#3c3c3c;border-radius:2px;"></div>
<div style="left:666px;top:333.5px;width:6.5px;height:6px;background:#7c7c7c;border-radius:1px;"></div>
<div style="left:460px;top:352px;width:217px;height:1px;background:#444;"></div>
<div style="left:460px;top:353px;width:217px;height:1px;background:#5c5c5c;"></div>
<div style="left:465px;top:357px;width:99px;height:18px;background:#5a5a5a;border:1px solid #444;box-sizing:border-box;border-radius:2px;box-shadow:inset 0 1px 0 #686868;"></div>
<div class="l" style="left:471.5px;top:359.7px;font-size:11.5px;letter-spacing:0px;line-height:13.34px;height:13.34px;color:#e8e8e8;"><span class="cjt" style="width:20.8px;font-size:10.4px;">正常</span></div>
<svg class="a" style="left:555px;top:362px" width="5" height="7" viewBox="0 0 5 7"><path d="M2.5 0L4.8 2.8H0.2ZM2.5 7L4.8 4.2H0.2Z" fill="#d8d8d8"/></svg>
<div class="l" style="left:571px;top:359.7px;font-size:11.5px;letter-spacing:0px;line-height:13.34px;height:13.34px;color:#d8d8d8;"><span class="cjt" style="width:42.4px;font-size:10.6px;">不透明度</span>:</div>
<div style="left:623px;top:357px;width:33px;height:18px;background:#474747;border:1px solid #3e3e3e;box-sizing:border-box;"></div>
<div class="l" style="left:626px;top:359px;font-size:11px;line-height:14px;color:#686868;">100%</div>
<div style="left:656px;top:357px;width:17px;height:18px;background:#606060;border:1px solid #444;box-sizing:border-box;"></div>
<svg class="a" style="left:661.5px;top:364.5px" width="6" height="3.4" viewBox="0 0 6 3.4"><path d="M0.3 0H5.7L3 3.2Z" fill="#d8d8d8"/></svg>
<div style="left:460px;top:378px;width:217px;height:1px;background:#444;"></div>
<div style="left:460px;top:379px;width:217px;height:1px;background:#5c5c5c;"></div>
<div class="l" style="left:466px;top:384.2px;font-size:11.5px;letter-spacing:0px;line-height:13.34px;height:13.34px;color:#d8d8d8;"><span class="cjt" style="width:21.6px;font-size:10.8px;">锁定</span>:</div>
<svg class="a" style="left:499.5px;top:385.3px" width="10.6" height="10.6" viewBox="0 0 12 12"><rect x="0.5" y="0.5" width="11" height="11" fill="#6a6a6a" stroke="#8a8a8a"/><path d="M1 1H4.5V4.5H1ZM7.5 1H11V4.5H7.5ZM4.5 4.5H7.5V7.5H4.5ZM1 7.5H4.5V11H1ZM7.5 7.5H11V11H7.5Z" fill="#b4b4b4"/></svg>
<svg class="a" style="left:518px;top:383px" width="15" height="14" viewBox="0 0 15 14"><path d="M14 1L7 8.5" stroke="#c8c8c8" stroke-width="1.6" stroke-linecap="round"/><path d="M7.2 7.8C5.4 7.4 3.8 8.8 3.2 10.4C2.6 11.2 1.6 11.6 0.6 11.4C2.8 13.4 7.4 12.8 8.4 9Z" fill="#c8c8c8"/></svg>
<svg class="a" style="left:539px;top:384px" width="12" height="12" viewBox="0 0 12 12"><path d="M6 1V11M1 6H11" stroke="#b8b8b8" stroke-width="1.3"/><path d="M6 0L8 2.4H4ZM6 12L8 9.6H4ZM0 6L2.4 4V8ZM12 6L9.6 4V8Z" fill="#b8b8b8"/></svg>
<svg class="a" style="left:560px;top:383px" width="11" height="13" viewBox="0 0 11 13"><path d="M2.8 6V3.6C2.8 0.6 8.2 0.6 8.2 3.6V6" fill="none" stroke="#b8b8b8" stroke-width="1.4"/><rect x="1" y="5.6" width="9" height="6.8" rx="1" fill="#b8b8b8"/></svg>
<div class="l" style="left:593px;top:384.2px;font-size:11.5px;letter-spacing:0px;line-height:13.34px;height:13.34px;color:#d8d8d8;"><span class="cjt" style="width:21.6px;font-size:10.8px;">填充</span>:</div>
<div style="left:623px;top:382px;width:33px;height:18px;background:#474747;border:1px solid #3e3e3e;box-sizing:border-box;"></div>
<div class="l" style="left:626px;top:384px;font-size:11px;line-height:14px;color:#686868;">100%</div>
<div style="left:656px;top:382px;width:17px;height:18px;background:#606060;border:1px solid #444;box-sizing:border-box;"></div>
<svg class="a" style="left:661.5px;top:389.5px" width="6" height="3.4" viewBox="0 0 6 3.4"><path d="M0.3 0H5.7L3 3.2Z" fill="#d8d8d8"/></svg>
<div style="left:460px;top:403px;width:217px;height:1px;background:#3e3e3e;"></div>
<div style="left:460px;top:404px;width:203px;height:120px;background:#505050;"></div>
<div style="left:664px;top:404px;width:12px;height:120px;background:#4a4a4a;border-left:1px solid #3e3e3e;box-sizing:border-box;"></div>
<div style="left:460px;top:404px;width:27px;height:25px;background:#535353;"></div>
<div style="left:488px;top:404px;width:176px;height:25px;background:#596a82;"></div>
<div style="left:460px;top:429px;width:203px;height:1px;background:#3e3e3e;"></div>
<svg class="a" style="left:467px;top:411px" width="13" height="10" viewBox="0 0 13 10"><path d="M0.5 5C3 0.5 10 0.5 12.5 5C10 9.5 3 9.5 0.5 5Z" fill="#c8c8c8"/><circle cx="6.5" cy="5" r="2.4" fill="#444"/></svg>
<div style="left:491px;top:407px;width:30px;height:19px;background:#fff;border:1px solid #222;box-sizing:border-box;"></div>
<div class="l" style="left:530px;top:410px;font-size:11px;letter-spacing:0px;line-height:12.76px;height:12.76px;color:#f4f4f4;transform:skewX(-12deg);"><span class="cjt" style="width:22px;font-size:11px;">背景</span></div>
<svg class="a" style="left:639px;top:411px" width="10" height="12" viewBox="0 0 10 12"><path d="M2.6 5.5V3.4C2.6 0.6 7.4 0.6 7.4 3.4V5.5" fill="none" stroke="#e0e0e0" stroke-width="1.2"/><rect x="1" y="5.4" width="8" height="6" rx="0.8" fill="none" stroke="#e0e0e0" stroke-width="1.2"/><rect x="4.4" y="7.4" width="1.2" height="2" fill="#e0e0e0"/></svg>
<div style="left:460px;top:523px;width:217px;height:1px;background:#5f5f5f;"></div>
<div style="left:460px;top:524px;width:217px;height:16px;background:#535353;"></div>
<svg class="a" style="left:494px;top:528px" width="13" height="8" viewBox="0 0 13 8"><rect x="0.7" y="1.2" width="6.4" height="5" rx="2.5" fill="none" stroke="#a0a0a0" stroke-width="1.3"/><rect x="5.9" y="1.2" width="6.4" height="5" rx="2.5" fill="none" stroke="#a0a0a0" stroke-width="1.3"/></svg>
<div class="l" style="left:520px;top:524px;font-family:'Liberation Serif',serif;font-style:italic;font-size:13px;line-height:15px;color:#8a8a8a;">fx</div>
<svg class="a" style="left:543px;top:526px" width="12" height="11" viewBox="0 0 12 11"><rect x="0" y="0" width="12" height="11" fill="#b4b4b4"/><circle cx="6" cy="5.5" r="2.8" fill="#4a4a4a"/></svg>
<svg class="a" style="left:568px;top:526px" width="14" height="12" viewBox="0 0 14 12"><circle cx="5.5" cy="5.5" r="4.8" fill="#b4b4b4"/><path d="M2 9L9 2A5 5 0 0 1 2 9Z" fill="#5a5a5a" transform="rotate(180 5.5 5.5)"/><path d="M10.5 10H13.5L12 11.8Z" fill="#b4b4b4"/></svg>
<svg class="a" style="left:592px;top:526px" width="12" height="10" viewBox="0 0 12 10"><path d="M0 0H4.5L5.5 1.5H12V10H0Z" fill="#b4b4b4"/></svg>
<svg class="a" style="left:617px;top:526px" width="10" height="11" viewBox="0 0 10 11"><path d="M0 0H10V11H3.5L0 7.5Z" fill="#b4b4b4"/><path d="M0 7.5H3.5V11Z" fill="#5a5a5a"/><path d="M0.5 7.5H3.5V10.5" stroke="#444" stroke-width="0.8" fill="none"/></svg>
<svg class="a" style="left:641px;top:525.5px" width="11" height="12" viewBox="0 0 11 12"><path d="M0.5 2.3H10.5M4 0.7H7M1.5 3.2L2.2 11.2H8.8L9.5 3.2Z" fill="#646464" stroke="#6a6a6a" stroke-width="1"/></svg>
<div style="left:677px;top:1px;width:4px;height:542px;background:#424242;"></div>
<div style="left:681px;top:0px;width:1px;height:544px;background:#151515;"></div>
<svg class="a" style="left:500px;top:452px" width="174" height="74" viewBox="0 0 174 74"><path d="M21 2.3H151L170 14V62L156 71.4H17L2.8 57.5V14Z" fill="#fff"/><path d="M 59.24 42.18 A 23.9 23.9 0 1 0 41.58 59.84" fill="none" stroke="#2d6ff0" stroke-width="7" stroke-linecap="round"/><circle cx="35.9" cy="36.8" r="11" fill="none" stroke="#f6a623" stroke-width="6.6"/><path d="M43.7 44.6L53 53" stroke="#f6a623" stroke-width="6.4" stroke-linecap="round"/></svg>
<svg class="a" style="left:560px;top:460px" width="112" height="50" viewBox="0 0 112 50"><text x="3" y="42" font-size="36" font-weight="bold" letter-spacing="1" fill="#000" font-family="'Liberation Serif','Noto Serif CJK SC',serif">查询啦</text></svg>
<div class="l" style="left:567px;top:503.9px;font-size:14.8px;line-height:18px;color:#000;-webkit-text-stroke:0.4px #000;transform-origin:0 14.1px;transform:scaleY(0.96);">chaxunla.com</div>
<div style="left:0px;top:0px;width:1px;height:544px;background:#151515;"></div>
<div style="left:1px;top:1px;width:3px;height:542px;background:#4a4a4a;"></div>
<div style="left:0px;top:540px;width:682px;height:1px;background:#3a3a3a;"></div>
<div style="left:1px;top:541px;width:680px;height:2px;background:#4a4a4a;"></div>
<div style="left:0px;top:543px;width:682px;height:1px;background:#151515;"></div>
</div></body></html>
